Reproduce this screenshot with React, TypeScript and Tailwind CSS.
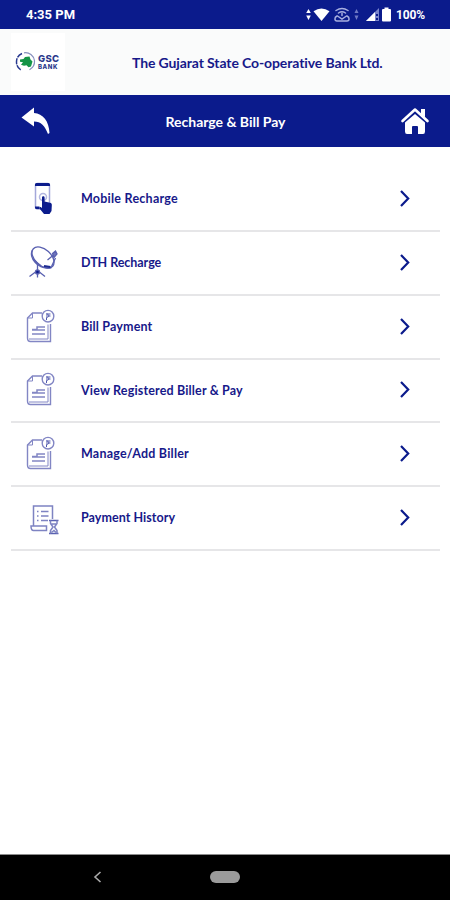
import type { ReactNode } from "react";

const NAVY = "#0b1b8c";

function StatusIcons() {
  return (
    <svg width="87" height="18" viewBox="0 0 87 18" fill="none">
      <path d="M3.500 3l2.300 4H1.200zM3.500 14L1.200 9.500h4.600z" fill="#fff" />
      <path d="M8.500 5.300Q16.500-.2 24.500 5.300L16.500 15z" fill="#fff" />
      <g stroke="#a8afe0" strokeWidth="1.500" strokeLinecap="round">
        <path d="M31 4.500Q37 .5 43 4.500M33.500 7Q37 4.500 40.500 7M37 7.500v2" />
        <path d="M32 10c-3 1.500-2.500 5 0 5h10c2.500 0 3-3.500 0-5M32.500 10l4.500 3 4.500-3" />
      </g>
      <path d="M51.500 3l2 4h-4zM51.500 14l-2-4.500h4z" fill="#6f79c4" />
      <path d="M74 2v13H61z" fill="#7b85cc" />
      <path d="M70 6v9h-9z" fill="#fff" />
      <path d="M71 8h2v2h-2zM71 12h2v2h-2z" fill="#0b1b8c" />
      <path d="M79.500 1.500h4V3H85a1 1 0 0 1 1 1v10.500a1 1 0 0 1-1 1h-7a1 1 0 0 1-1-1V4a1 1 0 0 1 1-1h1.500z" fill="#fff" />
    </svg>
  );
}

function BankLogo() {
  return (
    <div className="flex h-[58px] w-[54px] items-center gap-0.5 bg-white pl-[4px]">
      <svg width="21" height="22" viewBox="0 0 21 22" fill="none" className="shrink-0">
        <path d="M7 2.500C3 4.200 1.500 7.500 1.500 11c0 3.500 1.500 6.500 4.500 8" stroke="#27388f" strokeWidth="1.500" strokeDasharray="6 1" />
        <path d="M9 1.800c5-1 10 3 10.500 8 .3 4-1.500 7-5 9" stroke="#8790bd" strokeWidth="1.200" />
        <path d="M5 8.500l3.500-.5L10 6l4.500-.5 1 3 2 2-1.500 5-2.500.8-2-2-2.500.5-3-1 2-2.500-3-.5z" fill="#159447" />
      </svg>
      <div className="flex flex-col font-['Inter'] font-extrabold text-[#2c3a8c]">
        <span className="text-[9.5px] leading-[9px] tracking-[0.3px]">GSC</span>
        <span className="text-[6px] leading-[7px] tracking-[0.6px]">BANK</span>
      </div>
    </div>
  );
}

function MobileIcon() {
  return (
    <svg width="36" height="36" viewBox="0 0 36 36" fill="none">
      <rect x="11.500" y="2.500" width="14" height="25.500" rx="2" stroke="#a4a8da" strokeWidth="1.500" />
      <path d="M11 5V3.500Q11 2 12.500 2h12Q26 2 26 3.500V5zM11 25.500h4.500V28H12.500Q11 28 11 26.500z" fill={NAVY} />
      <circle cx="19" cy="16" r="3.500" stroke="#b3b6df" strokeWidth="1.500" />
      <path d="M18 16.500c0-1.700 2.600-1.700 2.600 0V20.500l5.400 1.200c1.500.3 2 1.300 1.800 2.700L27.500 30l-2 3h-5.500L15.500 27.500c-.5-1 .5-1.800 1.500-1.300l1 .8z" fill={NAVY} />
    </svg>
  );
}

function DishIcon() {
  return (
    <svg width="36" height="36" viewBox="0 0 36 36" fill="none" stroke="#5960b0" strokeWidth="1.300">
      <ellipse cx="19" cy="12.500" rx="8" ry="13" transform="rotate(-48 19 12.500)" />
      <path d="M8.500 5C4 12 14 25.500 27.500 22.500M9 14l8 7M27.500 21.500l4-8.500M23.500 15l6-5" />
      <path d="M28.500 8.500l3-2.500 1.500 3-3 3.500z" fill="#6f75bb" />
      <path d="M20 21l6.500 1" stroke="#1c2a91" strokeWidth="2" />
      <path d="M13.500 18v8M13.500 25.500L5.500 31.500M13.500 25.500l7.500 6M13.500 25v7.500" />
      <circle cx="13.500" cy="27" r="2" fill={NAVY} />
    </svg>
  );
}

function BillIcon() {
  return (
    <svg width="36" height="36" viewBox="0 0 36 36" fill="none" stroke="#8286c4" strokeWidth="1.400">
      <path d="M18 4H8.500L3.500 9v20q0 3.500 3 3.500h20V15" />
      <path d="M8.500 4v5h-5M24 15.500V30H5" strokeWidth="1" />
      <circle cx="24" cy="7.200" r="5.800" />
      <path d="M22 5h4.500M22 7h4.500M22.500 5c3 0 3 3.500 0 3.500v2.500" stroke="#5059ae" strokeWidth="1" />
      <path d="M8 20.500h5V18h8M8 21h13M8 25h13" strokeWidth="1.500" />
    </svg>
  );
}

function HistoryIcon() {
  return (
    <svg width="36" height="36" viewBox="0 0 36 36" fill="none" stroke="#7e83c2" strokeWidth="1.500">
      <path d="M9.500 26V6h19v13M7 26h15.500v4.500H9.500Q7 30.500 7 26z" />
      <path d="M17 11.500h7.500M17 16h7.500M17 20.500h7" />
      <path d="M13 11.500h1.500M13 16h1.500M13 20.500h1.500" strokeWidth="1.300" />
      <path d="M25 20.500h9.500M25 33.500h9.500" stroke="#5961b1" strokeWidth="1.700" />
      <path d="M26.500 20.500v3L29 27l-2.500 3.500v3M33 20.500v3L30.500 27l2.500 3.500v3M27.500 32.500l2.500-2 2 2M27.500 24h4.500" />
    </svg>
  );
}

const menuItems: Array<{ label: string; icon: ReactNode; tracking: string }> = [
  { label: "Mobile Recharge", icon: <MobileIcon />, tracking: "tracking-[0.24px]" },
  { label: "DTH Recharge", icon: <DishIcon />, tracking: "tracking-[-0.05px]" },
  { label: "Bill Payment", icon: <BillIcon />, tracking: "tracking-[0.15px]" },
  { label: "View Registered Biller & Pay", icon: <BillIcon />, tracking: "tracking-[0.16px]" },
  { label: "Manage/Add Biller", icon: <BillIcon />, tracking: "tracking-[0.22px]" },
  { label: "Payment History", icon: <HistoryIcon />, tracking: "tracking-[0.05px]" },
];

export default function App() {
  return (
    <div className="flex h-[900px] w-[450px] flex-col overflow-hidden bg-white font-['Lato',sans-serif] text-[#17198a]">
      <div className="flex h-[29px] shrink-0 items-center bg-[#0b1b8c] pl-[26px] pr-[25px] pt-px font-['Roboto'] font-bold text-white">
        <span className="text-[13px]">4:35 PM</span>
        <div className="ml-auto flex items-center gap-[4px]">
          <StatusIcons />
          <span className="w-[29px] whitespace-nowrap text-[12px] tracking-[-0.1px]">100%</span>
        </div>
      </div>

      <header className="flex h-[66px] shrink-0 items-center bg-[#fafbfb] pl-[11px]">
        <BankLogo />
        <h1 className="ml-[67px] whitespace-nowrap text-[14px] font-bold tracking-[-0.11px]">
          The Gujarat State Co-operative Bank Ltd.
        </h1>
      </header>

      <nav className="flex h-[52px] shrink-0 items-center justify-between bg-[#0b1b8c] pl-[21px] pr-[20px] text-white">
        <button type="button" aria-label="Back">
          <svg width="30" height="28" viewBox="0 0 30 28" fill="#fff">
            <path d="M.5 10.500L13 .5v5.500c9 .5 15 8 15.500 20l-1.500 1C24 19 20 14.500 13 14.500V19.500z" />
          </svg>
        </button>
        <h2 className="text-[14px] font-bold tracking-[-0.03px]">Recharge &amp; Bill Pay</h2>
        <button type="button" aria-label="Home">
          <svg width="30" height="28" viewBox="0 0 30 28" fill="#fff">
            <path d="M2.500 14L15 2.500 27.500 14" fill="none" stroke="#fff" strokeWidth="2.600" strokeLinecap="round" strokeLinejoin="round" />
            <path d="M21 2h4v8.500l-4-3.500z" />
            <path d="M5 15.500L15 7l10 8.500v9Q25 27 23 27h-5v-7q0-1-1-1h-4q-1 0-1 1v7H7q-2 0-2-2.500z" />
          </svg>
        </button>
      </nav>

      <main className="flex-1 px-[11px] pt-[21.500px]">
        {menuItems.map((item) => (
          <button
            key={item.label}
            type="button"
            className="flex h-[63.700px] w-[429px] items-center border-b-2 border-[#e6e6e8] pl-[13px] pr-[29px] text-left"
          >
            <span className="w-9 shrink-0">{item.icon}</span>
            <span className={`ml-[21px] whitespace-nowrap pt-px text-[12.5px] font-bold ${item.tracking}`}>
              {item.label}
            </span>
            <svg width="12" height="18" viewBox="0 0 12 18" fill="none" className="ml-auto">
              <path d="M2 1L9.200 8.500 2 16" stroke={NAVY} strokeWidth="2.200" />
            </svg>
          </button>
        ))}
      </main>

      <footer className="flex h-[46px] shrink-0 items-center border-t border-[#8c8c8c] bg-black pb-px pl-[93px]">
        <svg width="9" height="12" viewBox="0 0 9 12" fill="none">
          <path d="M7.500 1L2 6l5.500 5" stroke="#aaa" strokeWidth="1.600" />
        </svg>
        <div className="ml-[108px] h-3 w-[30px] rounded-full bg-[#9b9b9b]" />
      </footer>
    </div>
  );
}
